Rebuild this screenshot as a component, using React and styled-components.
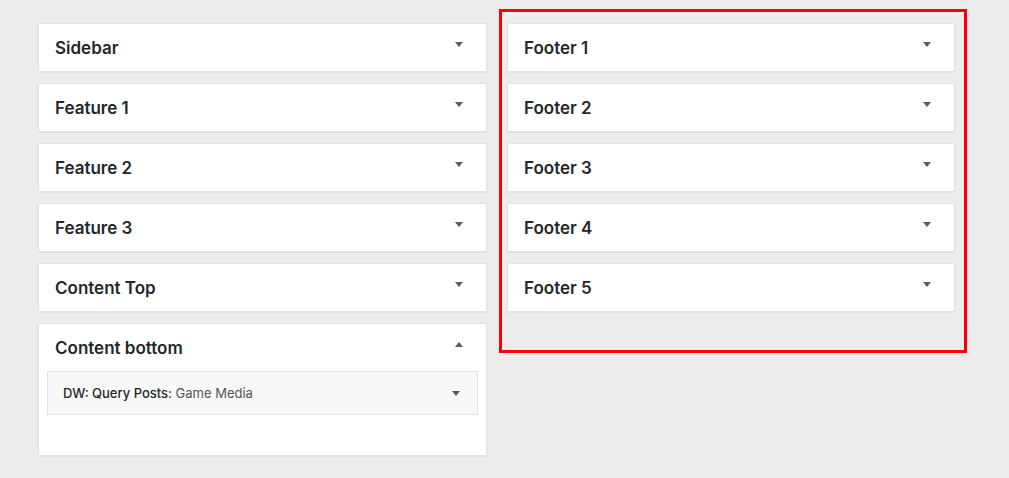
import React from 'react';
import styled, { createGlobalStyle } from 'styled-components';

const GlobalStyle = createGlobalStyle`
  html, body {
    margin: 0;
    padding: 0;
    background: #ececec;
    font-family: Inter, "Liberation Sans", Arial, sans-serif;
    color: #23282d;
  }
`;

const Page = styled.div`
  display: flex;
  align-items: flex-start;
  padding: 9px 0 0 38px;
  height: 478px;
  box-sizing: border-box;
  overflow: hidden;
`;

const Column = styled.div`
  display: flex;
  flex-direction: column;
  gap: 11px;
  width: ${(p) => p.$width}px;
  flex-shrink: 0;
`;

const LeftColumn = styled(Column)`
  margin-top: 14px;
`;

const Highlight = styled.div`
  margin-left: 12px;
  border: 3px solid #ff0000;
  padding: 11px 9px 38px 5px;
  flex-shrink: 0;
`;

const Panel = styled.div`
  background: #fff;
  border: 1px solid #e2e2e2;
  box-shadow: 0 1px 1px rgba(0, 0, 0, 0.04);
  padding-bottom: ${(p) => (p.$open ? '40px' : '0')};
`;

const Header = styled.div`
  height: 47px;
  display: flex;
  align-items: center;
  justify-content: space-between;
  padding: 0 23px 0 16px;
`;

const Title = styled.h2`
  margin: 0;
  font-size: 17px;
  font-weight: 600;
  color: #23282d;
`;

const Arrow = styled.span`
  width: 0;
  height: 0;
  border-left: 4px solid transparent;
  border-right: 4px solid transparent;
  ${(p) =>
    p.$up
      ? 'border-bottom: 5px solid #555d66;'
      : 'border-top: 5px solid #555d66;'}
  margin-top: ${(p) => (p.$centered ? '0' : '-6px')};
`;

const Widget = styled.div`
  margin: 0 8px;
  height: 42px;
  background: #f8f8f8;
  border: 1px solid #e2e2e2;
  display: flex;
  align-items: center;
  justify-content: space-between;
  padding: 0 17px 0 15px;
`;

const WidgetTitle = styled.span`
  font-size: 13px;
  font-weight: 500;
  color: #23282d;
`;

const WidgetName = styled.span`
  font-weight: 400;
  color: #555;
`;

const SidebarPanel = ({ name }) => (
  <Panel>
    <Header>
      <Title>{name}</Title>
      <Arrow />
    </Header>
  </Panel>
);

const leftSidebars = ['Sidebar', 'Feature 1', 'Feature 2', 'Feature 3', 'Content Top'];
const footers = ['Footer 1', 'Footer 2', 'Footer 3', 'Footer 4', 'Footer 5'];

const App = () => (
  <>
    <GlobalStyle />
    <Page>
      <LeftColumn $width={449}>
        {leftSidebars.map((name) => (
          <SidebarPanel key={name} name={name} />
        ))}
        <Panel $open>
          <Header>
            <Title>Content bottom</Title>
            <Arrow $up />
          </Header>
          <Widget>
            <WidgetTitle>
              DW: Query Posts: <WidgetName>Game Media</WidgetName>
            </WidgetTitle>
            <Arrow $centered />
          </Widget>
        </Panel>
      </LeftColumn>
      <Highlight>
        <Column $width={448}>
          {footers.map((name) => (
            <SidebarPanel key={name} name={name} />
          ))}
        </Column>
      </Highlight>
    </Page>
  </>
);

export default App;
